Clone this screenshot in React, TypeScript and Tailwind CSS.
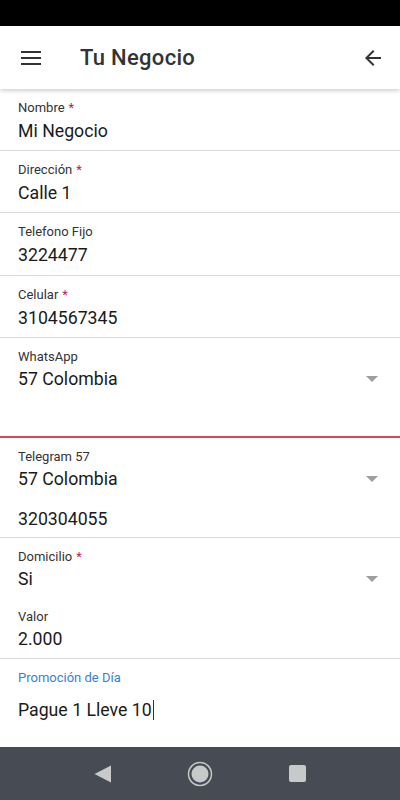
import React from "react";

const Req = () => <span className="text-[#c2185b] ml-[4px]">*</span>;

const Arrow = () => (
  <svg width="12" height="6" viewBox="0 0 12 6" className="shrink-0">
    <path d="M0 0 L12 0 L6 6 Z" fill="#9e9e9e" />
  </svg>
);

function Field({ label, value, req, extra }: { label: string; value: string; req?: boolean; extra?: boolean }) {
  return (
    <div className={"border-b border-[#d9d9d9] pl-[18px] pr-[20px] pt-[11px] " + (extra ? "pb-[8px]" : "pb-[7px]")}>
      <div className="text-[13px] leading-[16px] text-[#333]">
        {label}
        {req && <Req />}
      </div>
      <div className="mt-[3px] text-[17.7px] leading-[24px] text-[#1a1a1a]">{value}</div>
    </div>
  );
}

export default function App() {
  return (
    <div className="w-[400px] h-[800px] bg-white flex flex-col overflow-hidden" style={{ fontFamily: "Roboto, 'Noto Sans', sans-serif" }}>
      <div className="h-[26px] bg-black shrink-0" />
      <div className="relative z-10 h-[63px] shrink-0 bg-white flex items-center shadow-[0_2px_4px_rgba(0,0,0,0.18)]">
        <div className="w-[80px] flex items-center pl-[21px]">
          <svg width="20" height="14" viewBox="0 0 20 14">
            <rect x="0" y="0" width="20" height="2" fill="#333" />
            <rect x="0" y="6" width="20" height="2" fill="#333" />
            <rect x="0" y="12" width="20" height="2" fill="#333" />
          </svg>
        </div>
        <div className="flex-1 text-[22px] text-[#333] font-medium tracking-[0.3px]">Tu Negocio</div>
        <div className="pr-[15px]">
          <svg width="24" height="24" viewBox="0 0 24 24">
            <path d="M20 11H7.83l5.59-5.59L12 4l-8 8 8 8 1.41-1.41L7.83 13H20v-2z" fill="#333" />
          </svg>
        </div>
      </div>
      <div className="flex-1 flex flex-col">
        <Field label="Nombre" value="Mi Negocio" req />
        <Field label="Dirección" value="Calle 1" req />
        <Field label="Telefono Fijo" value="3224477" extra />
        <Field label="Celular" value="3104567345" req />
        <div className="h-[100px] border-b-2 border-[#d1455f] pl-[18px] pr-[22px] pt-[11px]">
          <div className="text-[13px] leading-[16px] text-[#333]">WhatsApp</div>
          <div className="mt-[2px] flex items-center justify-between">
            <span className="text-[17.7px] leading-[24px] text-[#1a1a1a]">57 Colombia</span>
            <Arrow />
          </div>
        </div>
        <div className="border-b border-[#d9d9d9] pl-[18px] pr-[22px] pt-[11px] pb-[6px]">
          <div className="text-[13px] leading-[16px] text-[#333]">Telegram 57</div>
          <div className="mt-[2px] flex items-center justify-between">
            <span className="text-[17.7px] leading-[24px] text-[#1a1a1a]">57 Colombia</span>
            <Arrow />
          </div>
          <div className="mt-[16px] text-[17.7px] leading-[24px] text-[#1a1a1a]">320304055</div>
        </div>
        <div className="border-b border-[#d9d9d9] pl-[18px] pr-[22px] pt-[11px] pb-[7px]">
          <div className="text-[13px] leading-[16px] text-[#333]">
            Domicilio
            <Req />
          </div>
          <div className="mt-[2px] flex items-center justify-between">
            <span className="text-[17.7px] leading-[24px] text-[#1a1a1a]">Si</span>
            <Arrow />
          </div>
          <div className="mt-[18px] text-[13px] leading-[16px] text-[#333]">Valor</div>
          <div className="mt-[2px] text-[17.7px] leading-[24px] text-[#1a1a1a]">2.000</div>
        </div>
        <div className="pl-[18px] pt-[11px]">
          <div className="text-[13px] leading-[16px] text-[#3b7fd1]">Promoción de Día</div>
          <div className="mt-[12px] flex items-center text-[17.7px] leading-[24px] text-[#1a1a1a]">
            <span>Pague 1 Lleve 10</span>
            <span className="inline-block w-[1px] h-[20px] bg-[#333] ml-[1px]" />
          </div>
        </div>
      </div>
      <div className="h-[53px] shrink-0 bg-[#474c54] flex items-center justify-center gap-[76px]">
        <svg width="17" height="18" viewBox="0 0 17 18">
          <path d="M17 0.5 L17 17.5 L0.5 9 Z" fill="#c8c9ca" />
        </svg>
        <svg width="26" height="26" viewBox="0 0 26 26">
          <circle cx="13" cy="13" r="11.5" fill="none" stroke="#c8c9ca" strokeWidth="1.5" />
          <circle cx="13" cy="13" r="8.5" fill="#c8c9ca" />
        </svg>
        <div className="w-[17px] h-[17px] rounded-[2px] bg-[#c8c9ca]" />
      </div>
    </div>
  );
}
